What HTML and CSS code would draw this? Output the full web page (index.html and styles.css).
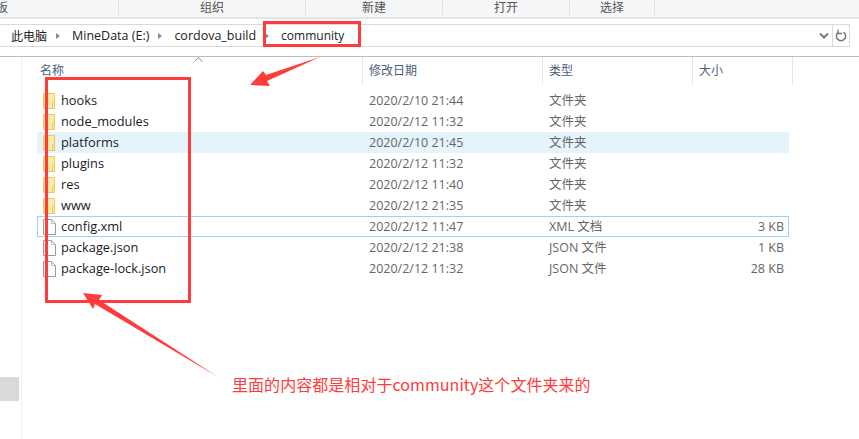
FILE: index.html
```html
<!DOCTYPE html>
<html lang="zh-CN">
<head>
  <meta charset="UTF-8" />
  <title>community</title>
  <link rel="stylesheet" href="styles.css">
</head>
<body>
  <svg class="defs" width="0" height="0">
    <symbol id="folder" viewBox="0 0 13 16">
      <path d="M.5 .5H11.5V15.5H.5Z" fill="#ffe9a8" stroke="#ebc965"/>
      <path d="M1 1H4V15H1Z" fill="#fbd976"/>
      <path d="M9.5 15V9.5L11.5 8.5" fill="none" stroke="#ebc965"/>
    </symbol>
    <symbol id="file" viewBox="0 0 13 16">
      <path d="M.5 .5H8.5L12.5 4.5V15.5H.5Z" fill="#fff" stroke="#9a9a9a"/>
      <path d="M8.5 .5V4.5H12.5" fill="none" stroke="#bdbdbd"/>
    </symbol>
  </svg>

  <div class="ribbon">
    <span class="group g1">板</span>
    <span class="group g2">组织</span>
    <span class="group g3">新建</span>
    <span class="group g4">打开</span>
    <span class="group g5">选择</span>
  </div>

  <div class="address">
    <div class="path">
      <span class="small">此电脑</span><i class="chev"></i>
      <span>MineData (E:)</span><i class="chev"></i>
      <span>cordova_build</span><i class="chev"></i>
      <span class="small">community</span>
    </div>
    <svg class="down" width="10" height="7" viewBox="0 0 10 7"><path d="M1 1.5L5 5.5L9 1.5" fill="none" stroke="#777" stroke-width="2"/></svg>
    <div class="refresh">
      <svg width="12" height="13" viewBox="0 0 12 13"><path d="M3.5 3.2A4.6 4.6 0 1 0 8.5 3.2" fill="none" stroke="#777" stroke-width="1.5"/><path d="M3 .5V4.5H7" fill="none" stroke="#777" stroke-width="1.3"/></svg>
    </div>
  </div>

  <div class="explorer">
    <aside class="nav"><div class="thumb"></div></aside>
    <main class="files">
      <div class="head">
        <span class="col-name">名称<svg class="sort" width="9" height="5" viewBox="0 0 9 5"><path d="M.5 4.5L4.5 .8L8.5 4.5" fill="none" stroke="#8a8a8a"/></svg></span>
        <span class="col-date">修改日期</span>
        <span class="col-type">类型</span>
        <span class="col-size">大小</span>
      </div>
      <div class="list">
        <div class="row"><svg class="ico"><use href="#folder"/></svg><span class="n">hooks</span><span class="d">2020/2/10 21:44</span><span class="t">文件夹</span><span class="s"></span></div>
        <div class="row"><svg class="ico"><use href="#folder"/></svg><span class="n">node_modules</span><span class="d">2020/2/12 11:32</span><span class="t">文件夹</span><span class="s"></span></div>
        <div class="row hover"><svg class="ico"><use href="#folder"/></svg><span class="n">platforms</span><span class="d">2020/2/10 21:45</span><span class="t">文件夹</span><span class="s"></span></div>
        <div class="row"><svg class="ico"><use href="#folder"/></svg><span class="n">plugins</span><span class="d">2020/2/12 11:32</span><span class="t">文件夹</span><span class="s"></span></div>
        <div class="row"><svg class="ico"><use href="#folder"/></svg><span class="n">res</span><span class="d">2020/2/12 11:40</span><span class="t">文件夹</span><span class="s"></span></div>
        <div class="row"><svg class="ico"><use href="#folder"/></svg><span class="n">www</span><span class="d">2020/2/12 21:35</span><span class="t">文件夹</span><span class="s"></span></div>
        <div class="row focus"><svg class="ico"><use href="#file"/></svg><span class="n">config.xml</span><span class="d">2020/2/12 11:47</span><span class="t">XML 文档</span><span class="s">3 KB</span></div>
        <div class="row"><svg class="ico"><use href="#file"/></svg><span class="n">package.json</span><span class="d">2020/2/12 21:38</span><span class="t">JSON 文件</span><span class="s">1 KB</span></div>
        <div class="row"><svg class="ico"><use href="#file"/></svg><span class="n">package-lock.json</span><span class="d">2020/2/12 11:32</span><span class="t">JSON 文件</span><span class="s">28 KB</span></div>
      </div>
    </main>
  </div>

  <!-- red markup drawn on top of the screenshot -->
  <svg class="markup" width="859" height="439" viewBox="0 0 859 439">
    <rect x="264.5" y="22.5" width="95" height="23" fill="none" stroke="#ff3b3b" stroke-width="3"/>
    <rect x="46.5" y="78.5" width="143" height="223" fill="none" stroke="#ff3b3b" stroke-width="3"/>
    <path d="M320 57L267 81L270 86L250 85L263 71L266 75Z" fill="#ff3b3b"/>
    <path d="M83 293L102 295L99 300L218 377L95 304L93 309Z" fill="#ff3b3b"/>
  </svg>
  <div class="note">里面的内容都是相对于community这个文件夹来的</div>
</body>
</html>
```

FILE: styles.css
```css
* {
  box-sizing: border-box;
}
html, body {
  margin: 0;
  height: 100%;
}
body {
  position: relative;
  width: 859px;
  height: 439px;
  overflow: hidden;
  background: #fff;
  color: #222;
  font-family: "Open Sans", "Noto Sans CJK SC", sans-serif;
  font-size: 12.5px;
}
.defs {
  position: absolute;
}

/* ribbon */
.ribbon {
  display: grid;
  grid-template-columns: 119px 187px 137px 127px 85px;
  height: 19px;
  background: #f5f6f7;
  border-bottom: 2px solid #e3e4e6;
}
.group {
  height: 15px;
  border-right: 1px solid #e1e2e4;
  color: #555;
  font-size: 12px;
  line-height: 15px;
  text-align: center;
}
.g1 {
  text-align: left;
  margin-left: -4px;
}

/* address bar */
.address {
  display: flex;
  align-items: center;
  width: 850px;
  height: 23px;
  margin-top: 5px;
  border: 1px solid #d9d9d9;
  border-left: 0;
}
.path {
  display: flex;
  align-items: center;
  flex: 1;
  padding-left: 11px;
  color: #222;
}
.path .small {
  font-size: 12px;
}
.chev {
  width: 0;
  height: 0;
  margin: 0 12px 0 9px;
  border-left: 4px solid #8a8a8a;
  border-top: 3px solid transparent;
  border-bottom: 3px solid transparent;
}
.down {
  margin-right: 3px;
}
.refresh {
  display: flex;
  align-items: center;
  justify-content: center;
  width: 17px;
  height: 100%;
  border-left: 1px solid #d9d9d9;
}

/* main pane */
.explorer {
  display: flex;
  height: 392px;
  margin-top: 9px;
  border-top: 1px solid #bdbdbd;
}
.nav {
  width: 22px;
  border-right: 1px solid #f0f0f0;
  padding-top: 320px;
}
.thumb {
  width: 19px;
  height: 24px;
  background: #d9d9d9;
}
.files {
  flex: 1;
}
.head {
  display: grid;
  grid-template-columns: 341px 180px 150px 100px;
  height: 27px;
  color: #4c607a;
  font-size: 12px;
}
.head span {
  padding-left: 6px;
  line-height: 27px;
  border-right: 1px solid #e5e5e5;
}
.head .col-name {
  position: relative;
  padding-left: 18px;
}
.sort {
  position: absolute;
  left: 172px;
  top: 0;
}
.list {
  margin-left: 15px;
  padding-top: 6px;
  width: 752px;
}
.row {
  display: grid;
  grid-template-columns: 23px 308px 180px 144px 91px;
  align-items: center;
  height: 21px;
  color: #666;
  border: 1px solid transparent;
}
.row span {
  line-height: 16px;
}
.row .ico {
  width: 13px;
  height: 16px;
  margin-left: 5px;
}
.row .n {
  color: #1a1a2a;
  font-size: 12.8px;
  padding-bottom: 1px;
}
.row .s {
  text-align: right;
}
.hover {
  background: #e5f3fb;
}
.focus {
  border-color: #99d1ff;
}

/* annotations */
.markup {
  position: absolute;
  left: 0;
  top: 0;
}
.note {
  position: absolute;
  left: 232px;
  top: 373px;
  color: #ff3b3b;
  font-family: "Noto Sans CJK SC", sans-serif;
  font-size: 16px;
  letter-spacing: 0.05px;
  line-height: 22px;
  white-space: nowrap;
}
```
